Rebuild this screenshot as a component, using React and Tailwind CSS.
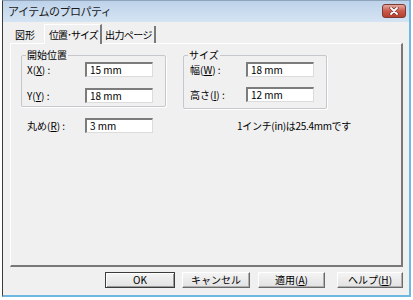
function Field({ value, width = 'w-[68px]' }) {
  return (
    <div
      className={`${width} h-[15px] bg-white border-t-2 border-l-2 border-r border-b border-t-[#7c7c7c] border-l-[#7c7c7c] border-r-[#dcdcdc] border-b-[#dcdcdc] pl-[3px] flex items-center leading-none`}
    >
      {value}
    </div>
  );
}

function Mn({ children }) {
  return <span className="underline underline-offset-1">{children}</span>;
}

function Row({ label, value, labelClass }) {
  return (
    <div className="flex items-center">
      <div className={labelClass}>{label}</div>
      <Field value={value} />
    </div>
  );
}

function Btn({ children, className = '', primary = false }) {
  return (
    <button
      className={`h-[16px] flex items-center justify-center leading-none whitespace-nowrap bg-gradient-to-b from-[#f4f4f4] to-[#e2e2e2] ${
        primary
          ? 'border border-[#3c3c3c] shadow-[inset_1px_1px_0_#ffffff,inset_-1px_-1px_0_#9a9a9a]'
          : 'border border-t-[#ffffff] border-l-[#ffffff] border-r-[#6a6a6a] border-b-[#6a6a6a] shadow-[inset_-1px_-1px_0_#b0b0b0]'
      } ${className}`}
    >
      {children}
    </button>
  );
}

export default function App() {
  return (
    <div className="w-[413px] h-[300px] bg-white text-[10px] text-black whitespace-nowrap font-['Noto_Sans_CJK_JP','Noto_Sans',sans-serif]">
      <div className="ml-[2px] w-[409px] h-[297px] flex flex-col border-l border-l-[#3c3c3c] border-t border-t-[#8fa3ba] border-r-2 border-r-[#6cb8e2] border-b-2 border-b-[#6cb8e2] bg-[#f0f0f0]">
        {/* title bar */}
        <div className="h-[21px] flex items-center justify-between pl-[5px] pr-[3px] bg-gradient-to-b from-[#bdd2ea] to-[#d5e4f3]">
          <span className="text-[11px] text-[#1a1a1a] tracking-[-0.5px]">アイテムのプロパティ</span>
          <div className="w-[24px] h-[14px] mt-[-2px] rounded-[3px] border border-[#7b3a33] bg-gradient-to-b from-[#e3a99f] via-[#c9584a] to-[#b8402f] flex items-center justify-center">
            <svg width="10" height="8" viewBox="0 0 10 8">
              <path d="M2 1 L8 7 M8 1 L2 7" stroke="#5a2a25" strokeWidth="3" strokeLinecap="round" />
              <path d="M2 1 L8 7 M8 1 L2 7" stroke="#ffffff" strokeWidth="1.8" strokeLinecap="round" />
            </svg>
          </div>
        </div>

        {/* client */}
        <div className="flex-1 flex flex-col pl-[7px]">
          {/* tabs */}
          <div className="flex items-end h-[21px] pt-[2px]">
            <div className="w-[34px] h-[17px] flex items-center pl-[5px]">図形</div>
            <div className="relative z-10 w-[58px] h-[20px] -mb-px bg-[#f0f0f0] border-t border-l border-white border-r-2 border-r-[#7a7a7a] flex items-center pl-[4px] tracking-[-1px]">
              位置･サイズ
            </div>
            <div className="w-[54px] h-[17px] border-r-2 border-r-[#7a7a7a] flex items-center pl-[3px] tracking-[-0.6px]">
              出力ページ
            </div>
          </div>

          {/* panel */}
          <div className="w-[393px] h-[224px] border-t border-l border-white border-r-2 border-b-2 border-r-[#787878] border-b-[#787878] pt-[5px] pl-[10px]">
            <div className="flex items-start">
              <fieldset className="w-[145px] h-[58px] border border-[#c4c8cc] rounded-[2px] shadow-[1px_1px_0_#ffffff]">
                <legend className="ml-[4px] px-[1px] leading-[12px]">開始位置</legend>
                <div className="flex flex-col gap-[11px] pt-[1px] pl-[5px]">
                  <Row label={<>X(<Mn>X</Mn>) :</>} value="15 mm" labelClass="w-[58px]" />
                  <Row label={<>Y(<Mn>Y</Mn>) :</>} value="18 mm" labelClass="w-[58px]" />
                </div>
              </fieldset>
              <fieldset className="ml-[17px] w-[144px] h-[60px] border border-[#c4c8cc] rounded-[2px] shadow-[1px_1px_0_#ffffff]">
                <legend className="ml-[4px] px-[1px] leading-[12px]">サイズ</legend>
                <div className="flex flex-col gap-[10px] pt-[1px] pl-[6px]">
                  <Row label={<>幅(<Mn>W</Mn>) :</>} value="18 mm" labelClass="w-[56px]" />
                  <Row label={<>高さ(<Mn>I</Mn>) :</>} value="12 mm" labelClass="w-[56px]" />
                </div>
              </fieldset>
            </div>

            <div className="flex items-center mt-[9px] pl-[6px]">
              <div className="w-[58px]">
                丸め(<Mn>R</Mn>) :
              </div>
              <Field value="3 mm" />
              <div className="ml-[84px] tracking-[-0.3px]">1インチ(in)は25.4mmです</div>
            </div>
          </div>

          {/* buttons */}
          <div className="flex mt-[5px] ml-[95px]">
            <Btn primary className="w-[70px]">OK</Btn>
            <Btn className="w-[68px] ml-[7px]">キャンセル</Btn>
            <Btn className="w-[67px] ml-[8px]">
              適用(<Mn>A</Mn>)
            </Btn>
            <Btn className="w-[66px] ml-[12px]">
              ヘルプ(<Mn>H</Mn>)
            </Btn>
          </div>
        </div>
      </div>
    </div>
  );
}
